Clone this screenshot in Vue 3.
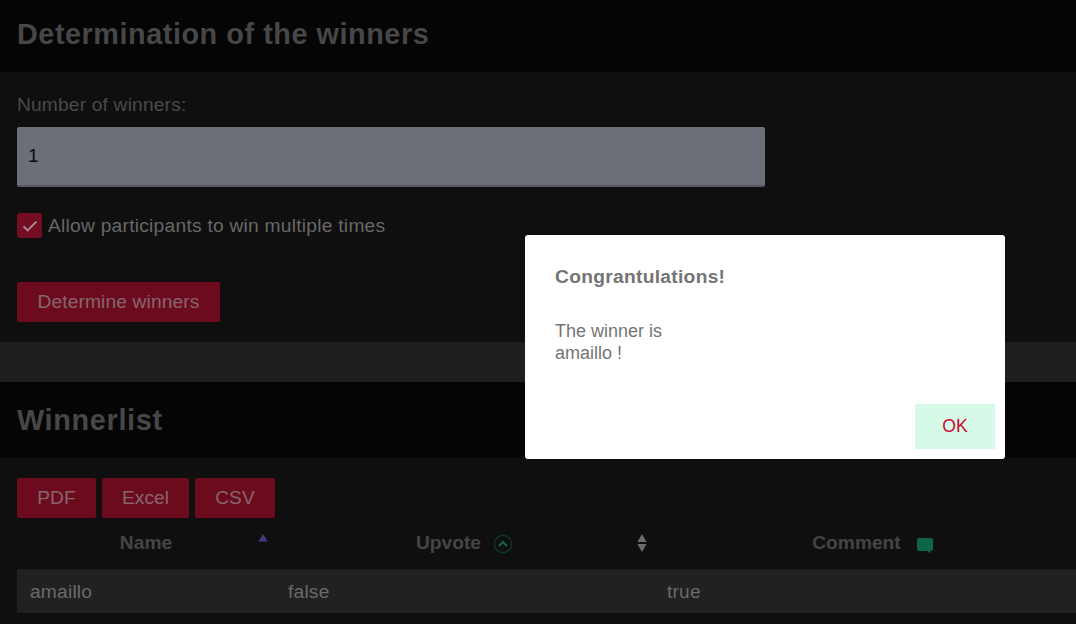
<script setup>
const exports_ = ['PDF', 'Excel', 'CSV']
</script>

<template>
  <div class="page">
    <header class="head"><h2>Determination of the winners</h2></header>
    <section class="panel first">
      <label class="lbl">Number of winners:</label>
      <div class="input">1</div>
      <div class="check">
        <span class="box">
          <svg width="16" height="14" viewBox="0 0 16 14"><path d="M1.5 7.4 5.6 11.4 14.4 2.6" fill="none" stroke="#a88a92" stroke-width="2"/></svg>
        </span>
        <span class="chk-text">Allow participants to win multiple times</span>
      </div>
      <button class="btn det">Determine winners</button>
    </section>
    <div class="band"></div>
    <header class="head second"><h2>Winnerlist</h2></header>
    <section class="panel list">
      <div class="exports">
        <button v-for="e in exports_" :key="e" class="btn" :class="'x' + e">{{ e }}</button>
      </div>
      <div class="table">
        <div class="th">
          <div class="cell c1">
            <span>Name</span>
            <svg class="sort" width="12" height="9" viewBox="0 0 12 9"><path d="M6 1 10.6 8.5H1.4Z" fill="#443c80"/></svg>
          </div>
          <div class="cell c2">
            <span>Upvote</span>
            <svg class="up" width="20" height="20" viewBox="0 0 20 20"><circle cx="10" cy="10" r="8.6" fill="none" stroke="#0c3d2c" stroke-width="1.2"/><path d="M6 12 10 8l4 4" fill="none" stroke="#14654a" stroke-width="2"/></svg>
            <svg class="sort" width="12" height="20" viewBox="0 0 12 20"><path d="M6 1 10.6 9H1.4ZM6 19 1.4 11H10.6Z" fill="#6c6c6c"/></svg>
          </div>
          <div class="cell c3">
            <span>Comment</span>
            <svg class="cm" width="18" height="17" viewBox="0 0 18 17"><path d="M3 1h12a2 2 0 0 1 2 2v9a2 2 0 0 1-2 2h-1v2.6L11.5 14H3a2 2 0 0 1-2-2V3a2 2 0 0 1 2-2Z" fill="#0f6347"/></svg>
          </div>
        </div>
        <div class="tr">
          <div class="td">amaillo</div>
          <div class="td">false</div>
          <div class="td">true</div>
        </div>
      </div>
    </section>

    <div class="modal">
      <h3>Congrantulations!</h3>
      <p>The winner is<br />amaillo !</p>
      <div class="foot"><button class="ok">OK</button></div>
    </div>
  </div>
</template>

<style scoped>
.page {
  position: relative;
  width: 1076px;
  height: 624px;
  overflow: hidden;
  background: #0f0f0f;
  font-family: "Liberation Sans", Arial, sans-serif;
  color: #707070;
  font-size: 19.2px;
}
.head {
  background: #050505;
  height: 72px;
  padding: 0 17px;
  display: flex;
  align-items: center;
}
.head h2 {
  margin: 0 0 4px;
  font-size: 28.8px;
  line-height: 34px;
  font-weight: 700;
  color: #474747;
  letter-spacing: .55px;
}
.second { height: 76px; }
.second h2 { margin: 0 0 1px; letter-spacing: .68px; }
.panel { padding: 0 17px; }
.first { height: 270px; padding-top: 22px; box-sizing: border-box; }
.lbl { display: block; line-height: 22px; color: #4a4a4a; letter-spacing: .17px; }
.input {
  box-sizing: border-box;
  margin-top: 11px;
  width: 748px;
  height: 60px;
  background: #6a6f78;
  border-bottom: 2px solid #55585e;
  border-radius: 2px;
  padding: 0 11px;
  line-height: 58px;
  color: #0c0c0c;
}
.check { display: flex; align-items: center; gap: 6px; margin-top: 26px; height: 25px; color: #686868; }
.chk-text { letter-spacing: .25px; }
.box {
  width: 25px; height: 25px; border-radius: 3px; background: #740c22;
  display: flex; align-items: center; justify-content: center;
}
.btn {
  border: 0;
  background: #6c0b1e;
  color: #86666d;
  font: inherit;
  height: 40px;
  border-radius: 2px;
  padding: 0;
}
.det { display: block; margin-top: 44px; width: 203px; letter-spacing: .12px; }
.band { height: 40px; background: #1f1f1f; }
.list { padding-top: 20px; }
.exports { display: flex; gap: 6px; }
.xPDF { width: 79px; }
.xExcel { width: 87px; }
.xCSV { width: 80px; }
.table { width: 1075px; }
.th { display: grid; grid-template-columns: 258px 379px 438px; height: 51px; }
.cell {
  position: relative;
  display: flex;
  align-items: center;
  justify-content: center;
  font-weight: 700;
  font-size: 19.2px;
  color: #454545;
  padding-bottom: 1px;
  box-sizing: border-box;
}
.sort { position: absolute; right: 6px; }
.c1 .sort { top: 15px; }
.c2 .sort { right: 6px; top: 15px; }
.up { margin-left: 12px; margin-top: 2px; }
.cm { margin-left: 15px; margin-top: 4px; }
.tr {
  display: grid;
  grid-template-columns: 258px 379px 438px;
  height: 44px;
  background: #212121;
  border-top: 1px solid #1a1a1a;
  box-sizing: border-box;
}
.td { padding-left: 13px; line-height: 43px; color: #6a6a6a; letter-spacing: .2px; }
.modal {
  position: absolute;
  left: 525px;
  top: 235px;
  width: 480px;
  height: 224px;
  background: #fff;
  border-radius: 3px;
  box-sizing: border-box;
  padding: 30px 10px 10px 30px;
  display: flex;
  flex-direction: column;
  color: #747474;
}
.modal h3 { margin: 0; font-size: 19.2px; line-height: 24px; font-weight: 700; letter-spacing: .3px; }
.modal p { margin: 31px 0 0; font-size: 18px; line-height: 22px; }
.foot { margin-top: auto; display: flex; justify-content: flex-end; }
.ok {
  width: 80px; height: 45px; border: 0; background: #d7f9e8; color: #cc0a30;
  font: 400 17.6px "Liberation Sans", Arial, sans-serif;
}
</style>
